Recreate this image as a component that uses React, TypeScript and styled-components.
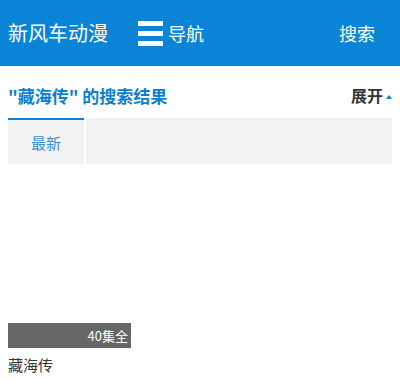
import React from "react";
import styled, { createGlobalStyle } from "styled-components";

const GlobalStyle = createGlobalStyle`
  body {
    margin: 0;
    background: #fff;
    font-family: "Noto Sans CJK SC", "Noto Sans", sans-serif;
  }
`;

const Page = styled.div`
  width: 400px;
`;

const Header = styled.div`
  height: 66px;
  background: #0a84d6;
  display: flex;
  align-items: center;
  padding: 0 8px;
  color: #fff;
`;

const Logo = styled.div`
  font-size: 20px;
  line-height: 1;
`;

const NavButton = styled.div`
  display: flex;
  align-items: center;
  gap: 5px;
  margin-left: 30px;
  font-size: 18px;
`;

const Burger = styled.div`
  width: 25px;
  height: 25px;
  display: flex;
  flex-direction: column;
  justify-content: space-between;
  span {
    height: 5px;
    background: #fff;
  }
`;

const SearchLink = styled.div`
  margin-left: auto;
  margin-right: 17px;
  font-size: 18px;
`;

const ResultHead = styled.div`
  display: flex;
  align-items: center;
  justify-content: space-between;
  box-sizing: border-box;
  padding: 6px 8px 0;
  height: 52px;
`;

const ResultTitle = styled.h2`
  margin: 0;
  font-size: 17px;
  font-weight: bold;
  color: #0a7fd0;
`;

const Toggle = styled.div`
  display: flex;
  align-items: center;
  gap: 3px;
  font-size: 16px;
  font-weight: bold;
  color: #333;
  &::after {
    content: "";
    margin-top: 4px;
    border-left: 3px solid transparent;
    border-right: 3px solid transparent;
    border-bottom: 4px solid #0a84d6;
  }
`;

const Tabs = styled.div`
  margin: 0 8px;
  display: flex;
  gap: 2px;
  height: 46px;
`;

const Tab = styled.div<{ $active?: boolean; $fill?: boolean }>`
  background: #f2f2f2;
  width: ${(p) => (p.$fill ? "auto" : "76px")};
  flex: ${(p) => (p.$fill ? 1 : "none")};
  box-sizing: border-box;
  border-top: 2px solid ${(p) => (p.$active ? "#0a84d6" : "#f2f2f2")};
  display: flex;
  align-items: center;
  justify-content: center;
  font-size: 15px;
  color: #3b8fd5;
`;

const List = styled.div`
  padding: 10px 8px 0;
  display: flex;
`;

const Item = styled.div`
  width: 123px;
`;

const Cover = styled.div`
  position: relative;
  height: 174px;
`;

const Badge = styled.div`
  position: absolute;
  left: 0;
  right: 0;
  bottom: 0;
  height: 25px;
  background: #666;
  color: #fff;
  font-size: 13px;
  line-height: 25px;
  text-align: right;
  padding-right: 3px;
`;

const ItemName = styled.div`
  margin-top: 6px;
  font-size: 15px;
  color: #333;
`;

export default function App() {
  return (
    <Page>
      <GlobalStyle />
      <Header>
        <Logo>新风车动漫</Logo>
        <NavButton>
          <Burger>
            <span />
            <span />
            <span />
          </Burger>
          导航
        </NavButton>
        <SearchLink>搜索</SearchLink>
      </Header>
      <ResultHead>
        <ResultTitle>"藏海传" 的搜索结果</ResultTitle>
        <Toggle>展开</Toggle>
      </ResultHead>
      <Tabs>
        <Tab $active>最新</Tab>
        <Tab $fill />
      </Tabs>
      <List>
        <Item>
          <Cover>
            <Badge>40集全</Badge>
          </Cover>
          <ItemName>藏海传</ItemName>
        </Item>
      </List>
    </Page>
  );
}
